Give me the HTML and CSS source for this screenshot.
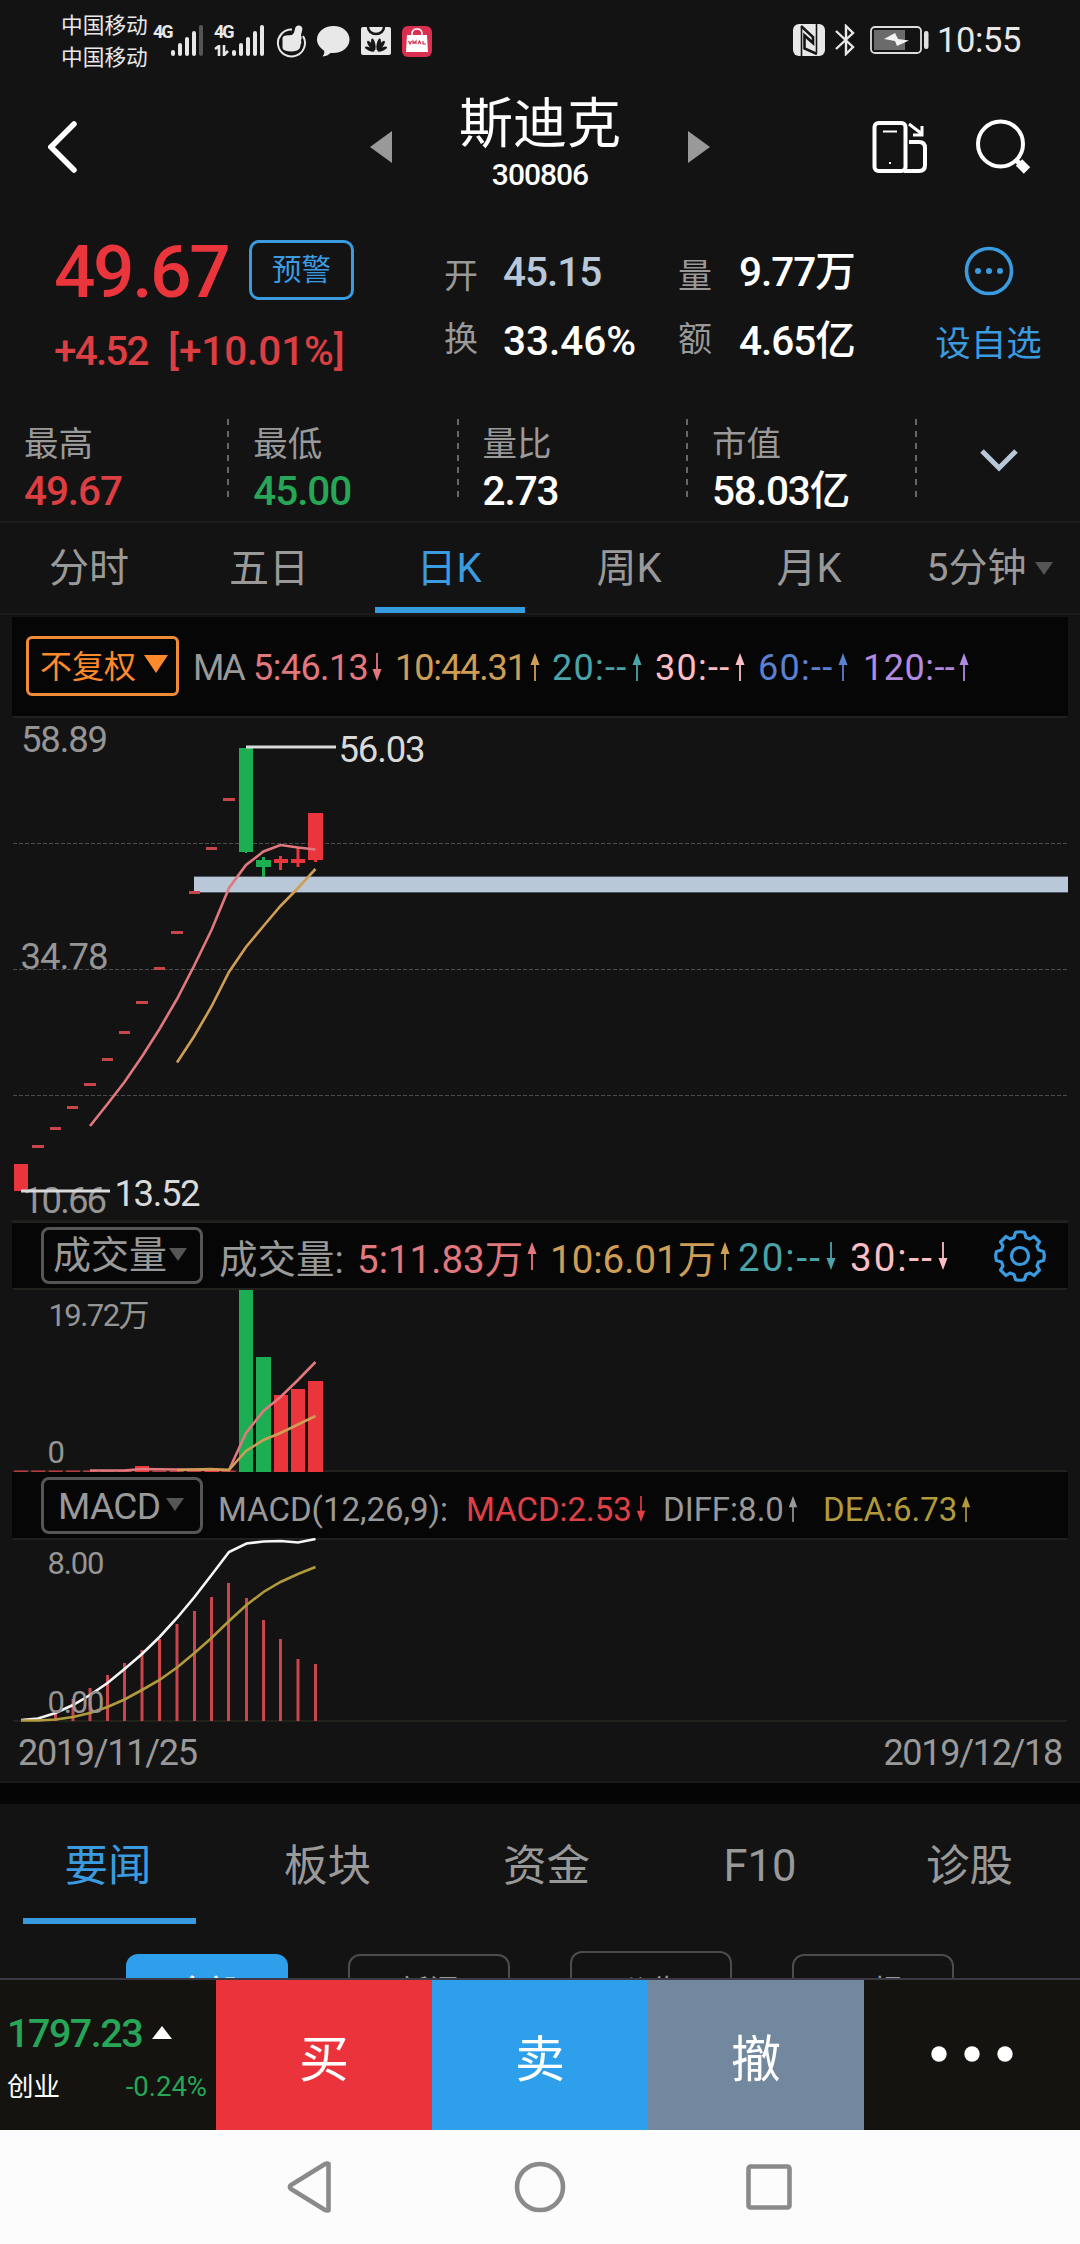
FILE: index.html
```html
<!DOCTYPE html>
<html lang="zh-CN">
<head>
<meta charset="utf-8">
<title>斯迪克 300806</title>
<link rel="stylesheet" href="styles.css">
</head>
<body>
<svg class="defs" width="0" height="0">
  <symbol id="up" viewBox="0 0 10 28"><path d="M5 0 9.5 12H.5z" fill="currentColor"/><path d="M5 8V28" stroke="currentColor" stroke-width="1.8"/></symbol>
  <symbol id="down" viewBox="0 0 10 28"><path d="M5 28 9.5 16H.5z" fill="currentColor"/><path d="M5 0V20" stroke="currentColor" stroke-width="1.8"/></symbol>
  <symbol id="caret" viewBox="0 0 18 13"><path d="M0 0H18L9 13z" fill="currentColor"/></symbol>
</svg>

<div class="status">
  <div class="carriers"><span>中国移动</span><span>中国移动</span></div>
  <div class="net"><b>4G</b>
    <svg width="32" height="32" viewBox="0 0 32 32" fill="#e8e8e8"><rect y="25" width="4" height="6" rx="2"/><rect x="7" y="18" width="4" height="13" rx="2"/><rect x="14" y="12" width="4" height="19" rx="2"/><rect x="21" y="6" width="4" height="25" rx="2"/><rect x="28" width="4" height="31" rx="2" fill="#555"/></svg>
  </div>
  <div class="net net2"><b>4G</b>
    <svg class="dataarrows" width="15" height="11" viewBox="0 0 15 11" stroke="#e8e8e8" stroke-width="2.6" fill="none"><path d="M1 4 5 1V11M10 0V10L14 6"/></svg>
    <svg width="32" height="32" viewBox="0 0 32 32" fill="#e8e8e8"><rect y="25" width="4" height="6" rx="2"/><rect x="7" y="18" width="4" height="13" rx="2"/><rect x="14" y="12" width="4" height="19" rx="2"/><rect x="21" y="6" width="4" height="25" rx="2"/><rect x="28" width="4" height="31" rx="2"/></svg>
  </div>
  <div class="notes">
    <svg width="30" height="33" viewBox="0 0 30 33"><path d="M16 4.500A13.500 13.500 0 1 0 27 11" fill="none" stroke="#e8e8e8" stroke-width="2"/><path d="M6.500 13Q7 10.500 10 10.500L16 10Q18.500 8 19 4 19.500 0 23.500 0.500 27.500 1.500 26 6L25 10Q26.500 13 25 15 26 18 24.500 20 24.500 24 21 25.500 15 27.500 9 25.500 6 24.500 6.500 21z" fill="#e8e8e8"/></svg>
    <svg width="33" height="31" viewBox="0 0 33 31"><path d="M16.500 0C7 0 0 6 0 13.500 0 18 3 22 7 24.500 8 27 6.500 29 5.500 30.500 10 30 12 28.500 13.500 27 25 28 32.500 21.500 32.500 13.500 32.500 6 26 0 16.500 0z" fill="#e8e8e8"/></svg>
    <svg width="30" height="28" viewBox="0 0 30 28"><rect width="30" height="28" rx="2" fill="#e8e8e8"/><path d="M7 0a8 7 0 0 0 16 0" fill="none" stroke="#161616" stroke-width="2.500"/><g fill="#161616"><ellipse cx="15" cy="17" rx="2" ry="6" transform="rotate(-12 15 25) translate(-1 0)"/><ellipse cx="15" cy="17" rx="2" ry="6" transform="rotate(12 15 25) translate(1 0)"/><ellipse cx="15" cy="17" rx="2" ry="6" transform="rotate(-38 15 25)"/><ellipse cx="15" cy="17" rx="2" ry="6" transform="rotate(38 15 25)"/><ellipse cx="15" cy="18" rx="1.700" ry="5" transform="rotate(-66 15 25)"/><ellipse cx="15" cy="18" rx="1.700" ry="5" transform="rotate(66 15 25)"/></g></svg>
    <svg width="30" height="31" viewBox="0 0 30 31"><rect width="30" height="31" rx="6" fill="#d9304f"/><path d="M10 11V8q0-5 5-5t5 5v3" fill="none" stroke="#fff" stroke-width="1.600"/><path d="M5 9H25L26 26H4z" fill="#fff"/><path d="M6.500 15l1.500 3 1.500-3M11 18v-3l1.500 2 1.500-2v3M16 18l1.500-3 1.500 3M21 15v3h3" fill="none" stroke="#d9304f" stroke-width="1.200"/></svg>
  </div>
  <div class="sys">
    <svg width="32" height="32" viewBox="0 0 32 32"><rect width="32" height="32" rx="6" fill="#e8e8e8"/><path d="M8.500 32V3.500M23.500 0V28.500" stroke="#141414" stroke-width="1.600"/><path d="M8 2 20 13V19L11.500 11.500V24.500L24 30" stroke="#141414" stroke-width="2.600" fill="none"/></svg>
    <svg width="20" height="32" viewBox="0 0 20 32" fill="none" stroke="#e8e8e8" stroke-width="2.400"><path d="M1 7 18 23 11 30V2L18 9 1 25"/></svg>
    <svg width="59" height="28" viewBox="0 0 59 28"><rect x="1" y="1" width="50" height="26" rx="4" fill="none" stroke="#dcdcdc" stroke-width="1.800"/><rect x="4" y="4" width="31" height="20" fill="#6b6b6b"/><rect x="54" y="5" width="4.500" height="18" rx="2" fill="#e0e0e0"/><path d="M14 13 25 7 28 13 39 14.500 27 20 25 15z" fill="#f2f2f2"/></svg>
    <span class="clock">10:55</span>
  </div>
</div>

<header class="header">
  <svg width="30" height="52" viewBox="0 0 30 52"><path d="M26 3 3 26 26 49" fill="none" stroke="#fff" stroke-width="5.500" stroke-linecap="round"/></svg>
  <svg width="22" height="32" viewBox="0 0 22 32"><path d="M22 0V32L0 16z" fill="#999"/></svg>
  <div class="name"><h1>斯迪克</h1><span>300806</span></div>
  <svg width="22" height="32" viewBox="0 0 22 32"><path d="M0 0V32L22 16z" fill="#999"/></svg>
  <svg class="rotate" width="56" height="54" viewBox="0 0 56 54" fill="none" stroke="#fff" stroke-width="4"><rect x="2.500" y="3" width="31" height="48" rx="4"/><path d="M37 22H47Q53 22 53 28V45Q53 51 47 51H32"/><path d="M11 11.500H25" stroke-width="2"/><path d="M37 4 50 14M50 6V15H41" stroke-width="3"/><rect x="17" y="42" width="2" height="2" fill="#fff" stroke="none"/></svg>
  <svg width="56" height="56" viewBox="0 0 56 56" fill="none" stroke="#fff"><circle cx="24.500" cy="25" r="22.500" stroke-width="4"/><path d="M40 41 44 45" stroke-width="5"/><path d="M43 43.500 51 51.500" stroke-width="9"/></svg>
</header>

<section class="quote">
  <div class="last">
    <div class="price"><strong>49.67</strong><a class="alert">预警</a></div>
    <div class="change"><span class="abs">+4.52</span><span class="pct">[+10.01%]</span></div>
  </div>
  <div class="qlabels"><span>开</span><span>换</span></div>
  <div class="qvalues"><span class="pale">45.15</span><span class="turnover">33.46%</span></div>
  <div class="qlabels"><span>量</span><span>额</span></div>
  <div class="qvalues"><span>9.77万</span><span>4.65亿</span></div>
  <div class="fav">
    <svg width="50" height="50" viewBox="0 0 50 50"><circle cx="25" cy="25" r="22.500" fill="none" stroke="#3a9be0" stroke-width="3.600"/><g fill="#3a9be0"><circle cx="14" cy="25" r="3"/><circle cx="25" cy="25" r="3"/><circle cx="36" cy="25" r="3"/></g></svg>
    <span>设自选</span>
  </div>
</section>

<section class="stats">
  <div class="stat"><label>最高</label><b class="red">49.67</b></div>
  <div class="stat"><label>最低</label><b class="green">45.00</b></div>
  <div class="stat"><label>量比</label><b>2.73</b></div>
  <div class="stat"><label>市值</label><b>58.03亿</b></div>
  <svg width="40" height="26" viewBox="0 0 40 26"><path d="M3 3 20 20 37 3" fill="none" stroke="#b9c8d8" stroke-width="5"/></svg>
</section>

<nav class="periods">
  <a>分时</a><a>五日</a><a class="on">日K</a><a>周K</a><a>月K</a><a class="more">5分钟<svg width="18" height="13"><use href="#caret"/></svg></a>
</nav>

<div class="strip ma">
  <a class="adjust">不复权<svg width="24" height="18" viewBox="0 0 18 13" preserveAspectRatio="none"><path d="M0 0H18L9 13z" fill="currentColor"/></svg></a>
  <span class="lbl">MA</span>
  <span class="c5">5:46.13<svg width="10" height="28"><use href="#down"/></svg></span>
  <span class="c10">10:44.31<svg width="10" height="28"><use href="#up"/></svg></span>
  <span class="c20 wide">20:--<svg width="10" height="28"><use href="#up"/></svg></span>
  <span class="c30 wide">30:--<svg width="10" height="28"><use href="#up"/></svg></span>
  <span class="c60 wide">60:--<svg width="10" height="28"><use href="#up"/></svg></span>
  <span class="c120">120:--<svg width="10" height="28"><use href="#up"/></svg></span>
</div>

<svg class="chart" width="1080" height="504" viewBox="0 716 1080 504">
  <path d="M13 717H1067" stroke="#212121" stroke-width="2"/>
  <path d="M13 843.500H1067M13 969.500H1067M13 1095.500H1067" stroke="#4c4c4c" stroke-dasharray="4 2"/>
  <rect x="194" y="876" width="874" height="17" fill="#4f5862"/>
  <rect x="194" y="877" width="874" height="15" fill="#b9c8d8"/>
  <g font-size="36.500" fill="#959595">
    <text x="21" y="752" textLength="87">58.89</text>
    <text x="20.500" y="969" textLength="88">34.78</text>
    <text x="23" y="1213" textLength="84">10.66</text>
  </g>
  <path d="M32 1146.500h12M50 1128.500h11M67 1107.500h11M84 1084.500h12M102 1059.500h11M119 1032.500h11M136 1002.500h12M154 968.500h11M171 932.500h12M189 892.500h11M206 848.500h11M223 799.500h12" stroke="#c8454b" stroke-width="3"/>
  <rect x="14" y="1164" width="14" height="27" fill="#eb353d"/>
  <path d="M239 748h14v104h-6v1h-2v-1h-6zM256 860h6v-3h3v3h6v7h-6v10h-3v-10h-6z" fill="#1dae54"/>
  <path d="M274 859h5v-3h3v3h6v4h-6v7h-3v-7h-5zM291 859h5.500v-11h3v11h5.500v4h-5.500v4h-3v-4h-5.500zM308 813h15v47h-6v2h-3v-2h-6z" fill="#eb353d"/>
  <polyline class="line pink" points="90,1126 107.500,1104 124.500,1082 142,1056.500 159.500,1029 177,999 194,966 211.500,930 229,888 246,865 263.500,851.500 280.500,845 298,847.500 315.500,849.500"/>
  <polyline class="line amber" points="177,1062.500 194,1036.500 211.500,1006.500 229,972 246,947 263.500,926 280.500,906 298,888 315.500,869"/>
  <path d="M246 747H336M21 1191H110" stroke="#dadada" stroke-width="3"/>
  <g font-size="36.500" fill="#dadada">
    <text x="338.500" y="762" textLength="87">56.03</text>
    <text x="114.500" y="1206" textLength="86">13.52</text>
  </g>
</svg>

<div class="strip vol">
  <a class="pick">成交量<svg width="18" height="13"><use href="#caret"/></svg></a>
  <span class="lbl">成交量:</span>
  <span class="c5">5:11.83万<svg width="10" height="32"><use href="#up"/></svg></span>
  <span class="c10">10:6.01万<svg width="10" height="32"><use href="#up"/></svg></span>
  <span class="c20 wide">20:--<svg width="10" height="28"><use href="#down"/></svg></span>
  <span class="c30 wide">30:--<svg width="10" height="28"><use href="#down"/></svg></span>
  <svg class="gear" width="54" height="54" viewBox="-27 -27 54 54" fill="none" stroke="#3a9be0" stroke-width="3.200" stroke-linejoin="round"><circle r="8.500"/><path d="M-4.500-23.500Q0-25 4.500-23.500L6-18.500 10-17 14-19.500 19.500-14 17-10 18.500-6 23.500-4.500Q25 0 23.500 4.500L18.500 6 17 10 19.500 14 14 19.500 10 17 6 18.500 4.500 23.500Q0 25-4.500 23.500L-6 18.500-10 17-14 19.500-19.500 14-17 10-18.500 6-23.500 4.500Q-25 0-23.500-4.500L-18.500-6-17-10-19.500-14-14-19.500-10-17-6-18.500z"/></svg>
</div>

<svg class="chart" width="1080" height="184" viewBox="0 1288 1080 184">
  <path d="M13 1289H1067M13 1471H1067" stroke="#23211d" stroke-width="2"/>
  <g font-size="31" fill="#959595">
    <text x="48.500" y="1326" textLength="101">19.72万</text>
    <text x="47.500" y="1463">0</text>
  </g>
  <path d="M14 1471.300H236" stroke="#b93a40" stroke-width="1.400" stroke-dasharray="14 3.300"/>
  <path d="M135 1466h14v6h-14zM205 1468h14v4h-14zM274 1395h14v77h-14zM291 1389h14v83h-14zM308 1381h15v91h-15z" fill="#eb353d"/>
  <path d="M239 1290h14v182h-14zM256 1357h15v115h-15z" fill="#1dae54"/>
  <polyline class="line pink" points="90,1470.500 124,1470.500 142,1469 177,1469.500 229,1470 246,1433 263.500,1411 280.500,1397 298,1380 315.500,1362"/>
  <polyline class="line amber" points="177,1470 211,1469 229,1470 246,1451 263.500,1440 280.500,1433 298,1424.500 315.500,1416"/>
</svg>

<div class="strip macd">
  <a class="pick">MACD<svg width="18" height="13"><use href="#caret"/></svg></a>
  <span class="lbl">MACD(12,26,9):</span>
  <span class="cm">MACD:2.53<svg width="10" height="26"><use href="#down"/></svg></span>
  <span class="lbl">DIFF:8.0<svg width="10" height="26"><use href="#up"/></svg></span>
  <span class="ce">DEA:6.73<svg width="10" height="26"><use href="#up"/></svg></span>
</div>

<svg class="chart" width="1080" height="184" viewBox="0 1538 1080 184">
  <path d="M13 1539H1067M13 1721H1067" stroke="#23211d" stroke-width="2"/>
  <path d="M55.500 1710V1721M73 1699V1721M90 1688V1721M107.500 1675V1721M124.500 1663V1721M142 1650V1721M159.500 1639V1721M177 1624V1721M194.500 1611V1721M211.500 1597V1721M228.500 1583V1721M246.500 1598V1721M263.500 1620V1721M280.500 1639V1721M298 1659V1721M315.500 1664V1721" stroke="#c8454b" stroke-width="3"/>
  <polyline class="line" stroke="#f6f6f6" points="21,1720 38,1718.500 55.500,1713 73,1705 90,1695 107.500,1683 124.500,1669 142,1654 159.500,1637 177,1618 194.500,1597 211.500,1575 229,1552 246.500,1543.500 263.500,1541.500 280.500,1541 298,1542.500 315.500,1539"/>
  <polyline class="line" stroke="#b09a3c" points="21,1720.500 38,1720.500 55.500,1719.500 73,1717 90,1713 107.500,1707 124.500,1699.500 142,1690 159.500,1680 177,1667.500 194.500,1653 211.500,1638 229,1621 246.500,1605 263.500,1592 280.500,1582 298,1574 315.500,1567"/>
  <g font-size="31" fill="#959595">
    <text x="47.500" y="1574" textLength="57">8.00</text>
    <text x="47.500" y="1713" textLength="57">0.00</text>
  </g>
</svg>

<div class="dates"><span>2019/11/25</span><span>2019/12/18</span></div>

<nav class="sections"><a class="on">要闻</a><a>板块</a><a>资金</a><a>F10</a><a>诊股</a></nav>

<div class="chips"><a class="on">全部</a><a>新闻</a><a class="tall">公告</a><a>研报</a></div>

<footer class="trade">
  <div class="index">
    <div class="row"><b>1797.23</b><svg width="20" height="13" viewBox="0 0 20 13"><path d="M10 0 20 13H0z" fill="#fff"/></svg></div>
    <div class="row sub"><span>创业</span><i>-0.24%</i></div>
  </div>
  <a class="buy">买</a><a class="sell">卖</a><a class="cancel">撤</a>
  <a class="dots"><svg width="82" height="16" viewBox="0 0 82 16" fill="#fff"><circle cx="8" cy="8" r="7.700"/><circle cx="41" cy="8" r="7.700"/><circle cx="74" cy="8" r="7.700"/></svg></a>
</footer>

<div class="sysnav">
  <svg width="46" height="52" viewBox="0 0 46 52"><path d="M41.500 3V49Q40 50 38 49L4 28Q2 26 4 24L38 3Q40 2 41.500 3z"/></svg>
  <svg width="52" height="52" viewBox="0 0 52 52"><circle cx="26" cy="26" r="23"/></svg>
  <svg width="46" height="46" viewBox="0 0 46 46"><rect x="2.500" y="2.500" width="41" height="41" rx="2"/></svg>
</div>
</body>
</html>
```
FILE: styles.css
```css
* { box-sizing: border-box; }
body {
  margin: 0;
  width: 1080px;
  height: 2244px;
  overflow: hidden;
  background: #131313;
  color: #fff;
  font-family: Roboto, "Noto Sans CJK SC", sans-serif;
}
svg { display: block; flex: none; }
.defs { display: none; }
b, strong { font-weight: 500; }

.status { display: flex; height: 80px; padding-left: 61px; color: #e8e8e8; }
.carriers { display: flex; flex-direction: column; width: 92px; padding-top: 10px; font-size: 21.7px; line-height: 32px; }
.net { display: grid; grid-template-columns: 18px 32px; width: 61px; height: 32px; margin-top: 25px; }
.net b { font-size: 18px; line-height: 14px; letter-spacing: -2px; font-weight: 700; }
.net2 { width: 62px; grid-template-rows: 20px 12px; }
.net2 svg:last-child { grid-column: 2; grid-row: 1 / 3; }
.net2 .dataarrows { grid-column: 1; grid-row: 2; }
.notes { display: flex; align-items: center; gap: 11px; height: 82px; }
.sys { display: flex; align-items: center; height: 80px; margin-left: auto; padding-right: 59px; }
.sys svg:nth-child(1) { margin-right: 10px; }
.sys svg:nth-child(2) { margin-right: 15px; }
.sys svg:nth-child(3) { margin-right: 8px; }
.clock { width: 84px; font-size: 34.5px; line-height: 82px; letter-spacing: -0.4px; }

.header {
  display: grid;
  grid-template-columns: 322px 22px 296px 22px 162px 104px 56px;
  align-items: center;
  height: 134px;
  padding-left: 48px;
}
.name { display: flex; flex-direction: column; align-items: center; height: 134px; padding-top: 12px; }
.name h1 { margin: 0; font-size: 54px; font-weight: 400; line-height: 66px; }
.name span { font-size: 30px; font-weight: 500; line-height: 34px; letter-spacing: -1px; }
.header .rotate { grid-column: 6; }

.quote { display: grid; grid-template-columns: 390px 59px 175px 61px 185px 129px; height: 191px; padding-left: 54px; }
.price { display: flex; align-items: center; padding-top: 25px; height: 86px; color: #eb353d; }
.price strong { width: 195px; padding-top: 4px; font-size: 73px; line-height: 62px; letter-spacing: -2.4px; }
.alert {
  width: 105px; height: 60px;
  border: 3px solid #3a9be0; border-radius: 10px;
  color: #3a9be0; font-size: 29.5px; line-height: 55px; text-align: center;
}
.change { display: flex; padding-top: 20px; color: #dc3e42; font-size: 40.5px; line-height: 62px; font-weight: 500; }
.abs { width: 114px; letter-spacing: -1.8px; }
.pct { letter-spacing: -0.1px; }
.qlabels { padding-top: 31px; color: #999; font-size: 34px; line-height: 63px; }
.qvalues { padding-top: 24px; font-size: 40.5px; line-height: 69px; font-weight: 500; letter-spacing: -1px; }
.qlabels span, .qvalues span { display: block; }
.qvalues .turnover { letter-spacing: 0; }
.pale { color: #b9c8d8; }
.fav { display: flex; flex-direction: column; align-items: center; padding-top: 32px; color: #3a9be0; font-size: 35.5px; line-height: 96px; }

.stats { display: flex; height: 118px; border-bottom: 2px solid #1d1d1d; }
.stat {
  width: 229.3px; height: 100px; padding: 15px 0 0 24px;
  background: repeating-linear-gradient(#666 0 6px, transparent 6px 12px) right 14px / 2px 78px no-repeat;
}
.stat b { display: block; font-size: 40.5px; line-height: 46px; letter-spacing: -1.1px; }
.stat label { display: block; color: #999; font-size: 34.5px; line-height: 48px; }
.stats > svg { margin: 43px 0 0 62px; }
.red, .stat .red { color: #dc3e42; }
.green { color: #26a656; }

.periods { display: flex; height: 92px; border-bottom: 2px solid #1b1b1b; color: #999; font-size: 40px; }
.periods a { width: 180px; padding-right: 2px; line-height: 91px; text-align: center; }
.periods .on { display: block; width: 150px; margin: 0 15px; height: 90px; border-bottom: 6px solid #369bdf; color: #3a9be0; }
.periods .more { display: flex; align-items: center; justify-content: center; gap: 9px; padding: 0; line-height: 96px; font-size: 39px; }
.more svg { color: #555; }

.strip { display: grid; align-items: center; margin: 0 12px; background: #060606; }
.strip span { display: flex; align-items: center; gap: 4px; white-space: nowrap; }
.lbl { color: #999; }
.c5 { color: #e1787d; }
.c10 { color: #cf9e55; }
.c20 { color: #4ba3aa; }
.c30 { color: #fdbdc5; }
.c60 { color: #5a80d0; }
.c120 { color: #b18ae0; }
.cm { color: #e04046; }
.ce { color: #b09a3c; }
.wide { letter-spacing: 1.3px; }

.ma { grid-template-columns: 167px 60px 142px 157px 103px 103px 105px 1fr; height: 99px; margin-top: 2px; padding: 0 0 2px 14px; font-size: 36px; }
.ma span { padding-top: 4px; }
.ma span svg { margin-bottom: 2px; }
.ma .lbl { letter-spacing: -2.5px; }
.ma .c5 { letter-spacing: -0.6px; }
.ma .c10 { letter-spacing: -1.1px; }
.ma .c120 { letter-spacing: 0.5px; }
.adjust {
  display: flex; align-items: center; gap: 8px;
  width: 153px; height: 60px; padding: 0 0 4px 11px;
  border: 3px solid #f08c36; border-radius: 6px;
  color: #ff8a2b; font-size: 32px;
}
.chart { font-family: Roboto, "Noto Sans CJK SC", sans-serif; }
.line { fill: none; stroke-width: 2.6; }
.pink { stroke: #e1787d; }
.amber { stroke: #cf9e55; }

.vol { grid-template-columns: 178px 138px 193px 188px 112px 143px 54px; height: 68px; padding-left: 29px; border-top: 3px solid #22201c; font-size: 38.5px; }
.vol .wide { padding-top: 3px; letter-spacing: 2px; }
.vol .wide svg { margin-bottom: 3px; }
.pick {
  display: flex; align-items: center; gap: 2px;
  width: 162px; height: 57px; padding-left: 9px;
  border: 3px solid #565656; border-radius: 8px;
  color: #999; font-size: 38px; line-height: 51px;
}
.pick svg { color: #555; margin-bottom: 3px; }
.macd { grid-template-columns: 177px 248px 197px 160px 1fr; height: 66px; padding-left: 29px; font-size: 33px; }
.macd .pick { padding: 2px 0 0 14px; gap: 5px; font-size: 37px; letter-spacing: -0.6px; }
.macd span { padding-top: 8px; }

.dates { display: flex; justify-content: space-between; height: 61px; padding: 0 18px; border-bottom: 2px solid #1b1b1b; color: #999; font-size: 36px; line-height: 62px; letter-spacing: -1.3px; }

.sections { display: grid; grid-template-columns: 218px 219px 219px 208px 211px; height: 147px; border-top: 21px solid #050505; color: #999; font-size: 43.5px; line-height: 126px; text-align: center; }
.sections .on { width: 173px; height: 120px; margin-left: 23px; padding-right: 3px; border-bottom: 6px solid #369bdf; color: #3a9be0; }

.chips { display: flex; gap: 60px; height: 50px; padding: 24px 0 0 126px; border-bottom: 2px solid #3a3a44; overflow: hidden; }
.chips a { flex: none; width: 162px; height: 66px; border: 2px solid #4c4c4c; border-radius: 12px; color: #999; font-size: 30px; line-height: 69px; text-align: center; }
.chips .on { background: #2e9fea; border-color: #2e9fea; color: #fff; font-weight: 500; }
.chips .tall { height: 69px; margin-top: -3px; line-height: 75px; }

.trade { display: grid; grid-template-columns: repeat(5, 216px); height: 150px; background: #14130f; }
.trade > a { display: flex; align-items: center; justify-content: center; padding-bottom: 1px; font-size: 50px; }
.trade .dots { padding: 0 0 3px; }
.buy { background: #ea333a; }
.sell { background: #2e9fea; }
.cancel { background: #71889f; }
.index { padding: 27px 9px 0 7px; }
.row { display: flex; align-items: center; gap: 10px; line-height: 54px; }
.row b { color: #26a656; font-size: 39.5px; letter-spacing: -1.5px; }
.row svg { margin-bottom: 4px; }
.sub { justify-content: space-between; font-size: 26.5px; line-height: 52px; }
.row i { color: #26a656; font-style: normal; font-size: 27.5px; }

.sysnav { display: flex; align-items: center; height: 114px; padding-left: 287px; background: #fcfcfc; fill: none; stroke: #8a8a8a; stroke-width: 4.6; }
.sysnav svg:nth-child(2) { margin: 0 180px 0 181px; }
```
